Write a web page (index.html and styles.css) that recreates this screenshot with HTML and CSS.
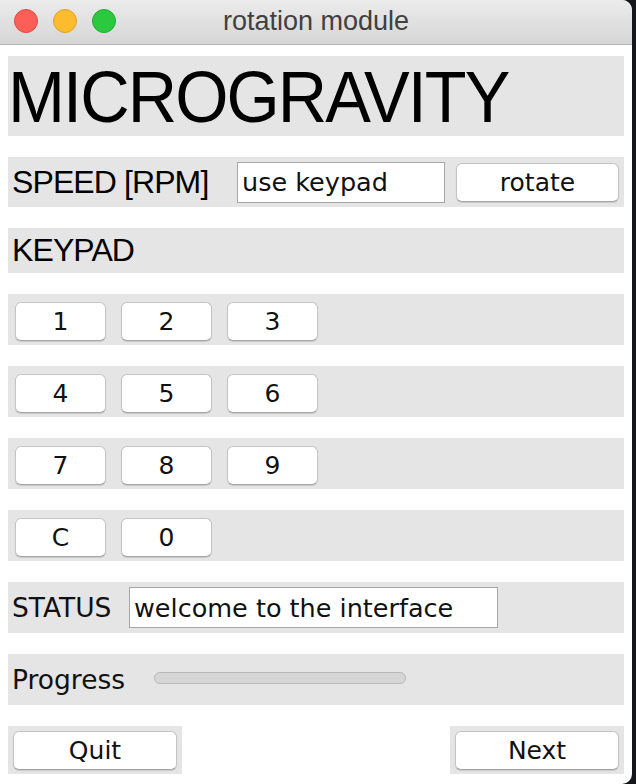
FILE: index.html
```html
<!DOCTYPE html>
<html>
<head>
<meta charset="utf-8">
<link rel="stylesheet" href="styles.css">
</head>
<body>
<div class="window">
  <div class="titlebar">
    <div class="lights">
      <span class="light red"></span>
      <span class="light yellow"></span>
      <span class="light green"></span>
    </div>
    <div class="title">rotation module</div>
    <div></div>
  </div>
  <div class="content">
    <div class="panel header"><span class="big">MICROGRAVITY</span></div>
    <div class="panel speed">
      <span class="label-lg speed-label">SPEED [RPM]</span>
      <div class="entry speed-entry">use keypad</div>
      <button class="btn rotate">rotate</button>
    </div>
    <div class="panel keypad-title"><span class="label-lg">KEYPAD</span></div>
    <div class="panel keyrow">
      <button class="btn key">1</button>
      <button class="btn key">2</button>
      <button class="btn key">3</button>
    </div>
    <div class="panel keyrow">
      <button class="btn key">4</button>
      <button class="btn key">5</button>
      <button class="btn key">6</button>
    </div>
    <div class="panel keyrow">
      <button class="btn key">7</button>
      <button class="btn key">8</button>
      <button class="btn key">9</button>
    </div>
    <div class="panel keyrow">
      <button class="btn key">C</button>
      <button class="btn key">0</button>
    </div>
    <div class="panel status">
      <span class="label status-label">STATUS</span>
      <div class="entry status-entry">welcome to the interface</div>
    </div>
    <div class="panel progress">
      <span class="label progress-label">Progress</span>
      <div class="bar"></div>
    </div>
    <div class="footer">
      <div class="frame"><button class="btn wide">Quit</button></div>
      <div class="frame"><button class="btn wide">Next</button></div>
    </div>
  </div>
</div>
</body>
</html>
```

FILE: styles.css
```css
html, body {
  margin: 0;
  padding: 0;
  background: #15151c;
  width: 636px;
  height: 784px;
  overflow: hidden;
}

.window {
  width: 632px;
  height: 784px;
  background: #ffffff;
  border-radius: 0 10px 10px 0;
  overflow: hidden;
}

.titlebar {
  height: 44px;
  border-bottom: 1px solid #b4b4b4;
  background: linear-gradient(#ececec, #d6d6d6);
  display: grid;
  grid-template-columns: 1fr auto 1fr;
  align-items: center;
}

.lights {
  display: flex;
  gap: 15px;
  padding-left: 14px;
  padding-bottom: 2px;
}

.light {
  width: 24px;
  height: 24px;
  border-radius: 50%;
  box-sizing: border-box;
}
.red { background: #fc5f57; border: 1px solid #de4a42; }
.yellow { background: #fdbb2e; border: 1px solid #dea124; }
.green { background: #2bc840; border: 1px solid #1faa2f; }

.title {
  font-family: "Liberation Sans", Arial, sans-serif;
  font-size: 27px;
  color: #404040;
  padding-bottom: 2px;
}

.content {
  padding: 11px 8px 0 8px;
  display: flex;
  flex-direction: column;
  gap: 21px;
}

.panel {
  background: #e5e5e5;
  display: flex;
  align-items: center;
  box-sizing: border-box;
}

.header {
  height: 80px;
}

.big {
  font-family: "Liberation Sans", Arial, sans-serif;
  font-size: 72px;
  letter-spacing: -2px;
  color: #000;
  line-height: 1;
  padding-top: 2px;
  display: inline-block;
  transform: scaleX(0.95);
  transform-origin: left center;
}

.label-lg {
  font-family: "Liberation Sans", Arial, sans-serif;
  font-size: 32px;
  letter-spacing: -0.9px;
  color: #000;
  padding-left: 4px;
}

.speed {
  height: 50px;
}

.speed-label {
  width: 229px;
  box-sizing: border-box;
}

.entry {
  background: #fff;
  border: 1px solid #a6a6a6;
  box-sizing: border-box;
  font-family: "DejaVu Sans", sans-serif;
  font-size: 25.5px;
  color: #111;
  padding-left: 4px;
  display: flex;
  align-items: center;
}

.speed-entry {
  width: 208px;
  height: 41px;
}

.btn {
  background: #fff;
  border: 1px solid #c4c4c4;
  border-bottom-color: #a4a4a4;
  border-radius: 6px;
  box-shadow: 0 1px 1px rgba(0, 0, 0, 0.12);
  font-family: "DejaVu Sans", sans-serif;
  font-size: 25px;
  color: #111;
  padding: 0;
  box-sizing: border-box;
}

.rotate {
  width: 163px;
  height: 39px;
  margin-left: 11px;
}

.keypad-title {
  height: 45px;
}

.keyrow {
  height: 51px;
  padding: 8px 0 4px 7px;
  gap: 15px;
}

.key {
  width: 91px;
  height: 39px;
}

.label {
  font-family: "DejaVu Sans", sans-serif;
  font-size: 26.5px;
  color: #111;
  padding-left: 4px;
  box-sizing: border-box;
}

.status {
  height: 51px;
}

.status-label {
  width: 121px;
}

.status-entry {
  width: 369px;
  height: 41px;
}

.progress {
  height: 51px;
}

.progress-label {
  width: 146px;
}

.bar {
  width: 252px;
  height: 12px;
  border-radius: 6px;
  background: #d6d6d6;
  border: 1px solid #b9b9b9;
  box-sizing: border-box;
  margin-top: -4px;
}

.footer {
  display: flex;
  justify-content: space-between;
}

.frame {
  background: #e5e5e5;
  width: 174px;
  height: 48px;
  padding: 5px;
  box-sizing: border-box;
}

.wide {
  width: 164px;
  height: 39px;
}
```
